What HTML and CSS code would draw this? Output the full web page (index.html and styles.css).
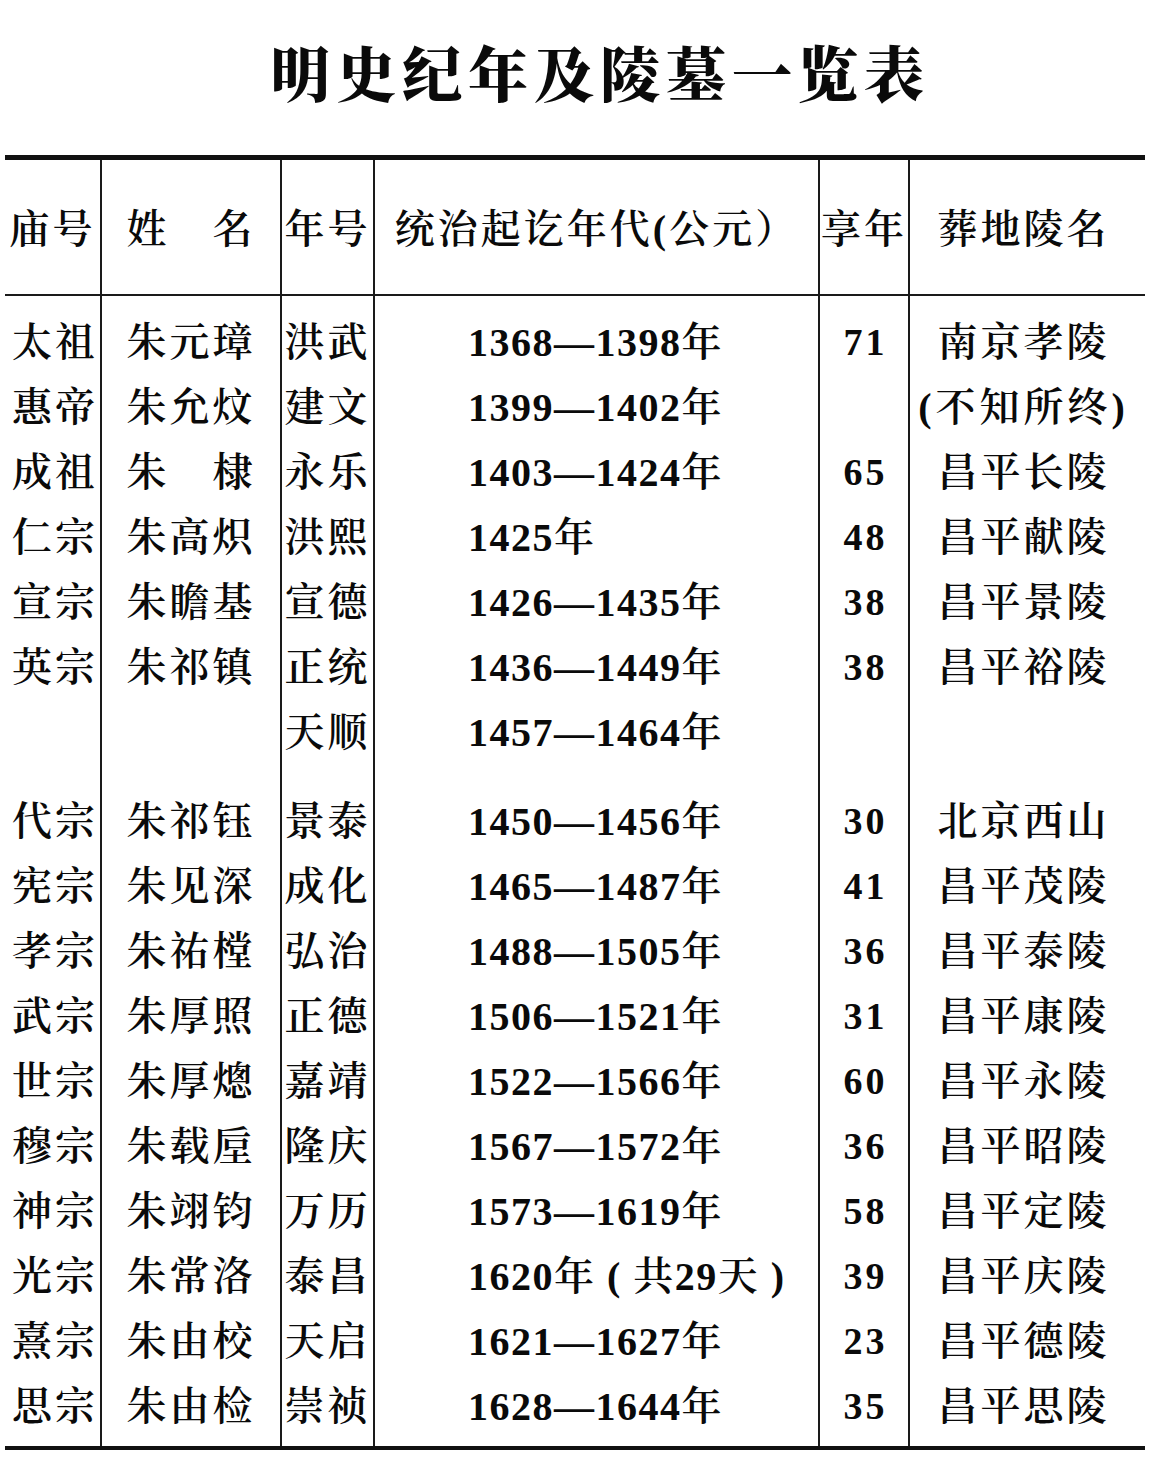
FILE: index.html
```html
<!DOCTYPE html>
<html lang="zh-CN">
<head>
<meta charset="utf-8">
<title>明史纪年及陵墓一览表</title>
<link rel="stylesheet" href="styles.css">
</head>
<body>
<div class="page">
  <h1 class="title">明史纪年及陵墓一览表</h1>
  <div class="table">
    <div class="row head">
      <div class="c c1">庙号</div>
      <div class="c c2">姓　名</div>
      <div class="c c3">年号</div>
      <div class="c c4h">统治起讫年代(公元）</div>
      <div class="c c5">享年</div>
      <div class="c c6">葬地陵名</div>
    </div>
    <div class="body">
      <div class="row first"><div class="c c1">太祖</div><div class="c c2">朱元璋</div><div class="c c3">洪武</div><div class="c c4">1368—1398年</div><div class="c c5 num">71</div><div class="c c6">南京孝陵</div></div>
      <div class="row"><div class="c c1">惠帝</div><div class="c c2">朱允炆</div><div class="c c3">建文</div><div class="c c4">1399—1402年</div><div class="c c5 num"></div><div class="c c6 wide">(不知所终)</div></div>
      <div class="row"><div class="c c1">成祖</div><div class="c c2">朱　棣</div><div class="c c3">永乐</div><div class="c c4">1403—1424年</div><div class="c c5 num">65</div><div class="c c6">昌平长陵</div></div>
      <div class="row"><div class="c c1">仁宗</div><div class="c c2">朱高炽</div><div class="c c3">洪熙</div><div class="c c4">1425年</div><div class="c c5 num">48</div><div class="c c6">昌平献陵</div></div>
      <div class="row"><div class="c c1">宣宗</div><div class="c c2">朱瞻基</div><div class="c c3">宣德</div><div class="c c4">1426—1435年</div><div class="c c5 num">38</div><div class="c c6">昌平景陵</div></div>
      <div class="row"><div class="c c1">英宗</div><div class="c c2">朱祁镇</div><div class="c c3">正统</div><div class="c c4">1436—1449年</div><div class="c c5 num">38</div><div class="c c6">昌平裕陵</div></div>
      <div class="row"><div class="c c1"></div><div class="c c2"></div><div class="c c3">天顺</div><div class="c c4">1457—1464年</div><div class="c c5 num"></div><div class="c c6"></div></div>
      <div class="row gap"><div class="c c1">代宗</div><div class="c c2">朱祁钰</div><div class="c c3">景泰</div><div class="c c4">1450—1456年</div><div class="c c5 num">30</div><div class="c c6">北京西山</div></div>
      <div class="row"><div class="c c1">宪宗</div><div class="c c2">朱见深</div><div class="c c3">成化</div><div class="c c4">1465—1487年</div><div class="c c5 num">41</div><div class="c c6">昌平茂陵</div></div>
      <div class="row"><div class="c c1">孝宗</div><div class="c c2">朱祐樘</div><div class="c c3">弘治</div><div class="c c4">1488—1505年</div><div class="c c5 num">36</div><div class="c c6">昌平泰陵</div></div>
      <div class="row"><div class="c c1">武宗</div><div class="c c2">朱厚照</div><div class="c c3">正德</div><div class="c c4">1506—1521年</div><div class="c c5 num">31</div><div class="c c6">昌平康陵</div></div>
      <div class="row"><div class="c c1">世宗</div><div class="c c2">朱厚熜</div><div class="c c3">嘉靖</div><div class="c c4">1522—1566年</div><div class="c c5 num">60</div><div class="c c6">昌平永陵</div></div>
      <div class="row"><div class="c c1">穆宗</div><div class="c c2">朱载垕</div><div class="c c3">隆庆</div><div class="c c4">1567—1572年</div><div class="c c5 num">36</div><div class="c c6">昌平昭陵</div></div>
      <div class="row"><div class="c c1">神宗</div><div class="c c2">朱翊钧</div><div class="c c3">万历</div><div class="c c4">1573—1619年</div><div class="c c5 num">58</div><div class="c c6">昌平定陵</div></div>
      <div class="row"><div class="c c1">光宗</div><div class="c c2">朱常洛</div><div class="c c3">泰昌</div><div class="c c4">1620年 ( 共29天 )</div><div class="c c5 num">39</div><div class="c c6">昌平庆陵</div></div>
      <div class="row"><div class="c c1">熹宗</div><div class="c c2">朱由校</div><div class="c c3">天启</div><div class="c c4">1621—1627年</div><div class="c c5 num">23</div><div class="c c6">昌平德陵</div></div>
      <div class="row last"><div class="c c1">思宗</div><div class="c c2">朱由检</div><div class="c c3">崇祯</div><div class="c c4">1628—1644年</div><div class="c c5 num">35</div><div class="c c6">昌平思陵</div></div>
    </div>
  </div>
</div>
</body>
</html>
```

FILE: styles.css
```css
html, body {
  margin: 0;
  padding: 0;
  background: #ffffff;
}

body {
  color: #0a0a0a;
  font-family: "Noto Serif CJK SC", "Liberation Serif", "Noto Sans CJK SC", serif;
}

.page {
  width: 1154px;
  height: 1468px;
  overflow: hidden;
}

.title {
  margin: 0;
  height: 155px;
  box-sizing: border-box;
  padding-top: 40px;
  padding-left: 46px;
  text-align: center;
  font-family: "Noto Serif CJK SC", "Noto Sans CJK SC", sans-serif;
  font-size: 60px;
  line-height: 62px;
  font-weight: 900;
  letter-spacing: 6px;
}

.table {
  margin-left: 5px;
  width: 1140px;
  border-top: 5px solid #111;
  border-bottom: 4px solid #111;
}

.row {
  display: grid;
  grid-template-columns: 95px 180px 93px 445px 90px 237px;
}

.c {
  box-sizing: border-box;
  height: 65px;
  line-height: 65px;
  font-size: 40px;
  font-weight: 600;
  letter-spacing: 3px;
  white-space: nowrap;
  text-align: center;
  border-left: 2px solid #1a1a1a;
  font-family: "Liberation Serif", "Noto Serif CJK SC", "Noto Sans CJK SC", serif;
}

.c1 {
  border-left: none;
  text-align: right;
  padding-right: 2px;
}

.c4 {
  text-align: left;
  padding-left: 93px;
  letter-spacing: 1.5px;
}

.c6 {
  padding-right: 8px;
}

.num {
  letter-spacing: 3px;
  font-size: 38px;
  padding-left: 3px;
}

.wide {
  letter-spacing: 4px;
  text-indent: -8px;
  padding-right: 0;
  overflow: visible;
}

.head {
  border-bottom: 2px solid #1a1a1a;
}

.head .c {
  height: 134px;
  line-height: 140px;
}

.head .c4h {
  letter-spacing: 3px;
}

.head .c1 {
  text-align: center;
  padding-right: 0;
}

.first .c {
  height: 79px;
  padding-top: 14px;
}

.gap .c {
  height: 89px;
  padding-top: 24px;
}

.last .c {
  height: 72px;
  padding-bottom: 7px;
}
```
